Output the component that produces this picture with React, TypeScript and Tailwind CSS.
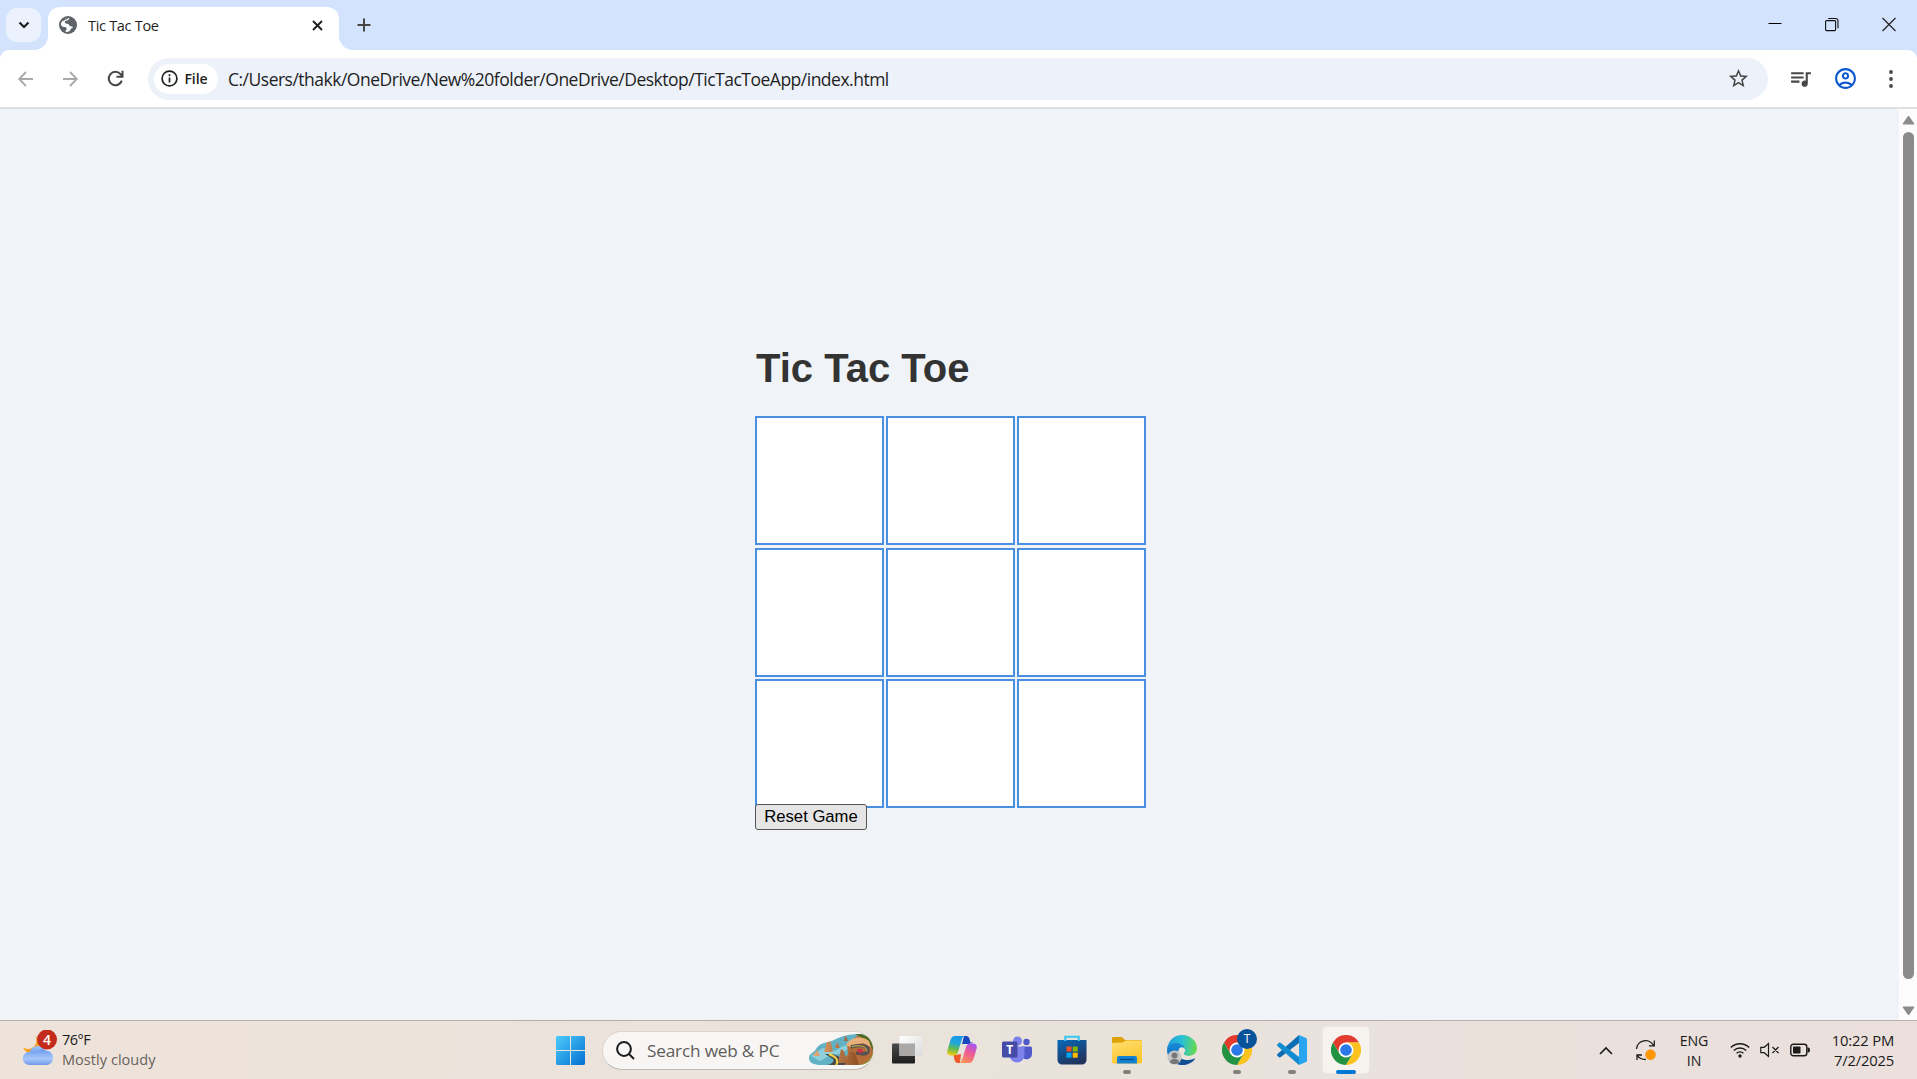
import React from "react";
import { MdOutlineAccountCircle, MdOutlineQueueMusic, MdStarOutline } from "react-icons/md";

function Globe() {
  return (
    <svg className="h-[18px] w-[18px]" viewBox="0 0 18 18">
      <circle cx="9" cy="9" r="9" fill="#5f6368" />
      <path d="M10.500 2C9.600 2.500 10 3.900 9 4.300c-1.300.4-2.900.2-3.200 1.500-.3 1.400 1 1.900 2.400 1.900 1.500 0 1.900.9 2.300 1.900.4.900 1.500.8 2.700.8.900 0 .8 1.300-.1 1.700-1.500.6-1.300 1.800-2.600 2.800-1 .8-2.500 1.200-3.700.9-.6-.200-.500-.900.1-1.300 1-.7.9-2 .4-2.700-.5-.8-1.500-.7-2.700-.8C3.200 10.900 2.900 9.400 1.900 8.900 1.900 5.200 5.600 1.500 10.500 2z" fill="#fff" />
      <path d="M3.200 5.200C4.500 3 6.500 1.900 9.400 1.900 8.700 3 7.600 3.300 6.300 3.700 4.900 4.100 4.800 5.400 3.200 5.200z" fill="#5f6368" />
    </svg>
  );
}

function TabStrip() {
  return (
    <div className="flex h-[50px] shrink-0 items-start bg-[#d3e3fd]">
      <button className="ml-[6px] mt-2 flex h-[34px] w-[35px] items-center justify-center rounded-[11px] bg-[#ebf2fe]">
        <svg className="h-3 w-3" viewBox="0 0 12 12" fill="none" stroke="#1f1f1f" strokeWidth="2.2">
          <path d="M1.500 3.500 6 8l4.500-4.500" />
        </svg>
      </button>
      <div className="relative ml-[7px] mt-[7px] flex h-[43px] w-[291px] items-center rounded-t-[12px] bg-white pb-[7px] pl-[11px]">
        <svg className="absolute -left-[14px] bottom-0 h-[14px] w-[14px]" viewBox="0 0 14 14"><path d="M14 0v14H0A14 14 0 0 0 14 0z" fill="#fff" /></svg>
        <svg className="absolute -right-[14px] bottom-0 h-[14px] w-[14px]" viewBox="0 0 14 14"><path d="M0 0v14h14A14 14 0 0 1 0 0z" fill="#fff" /></svg>
        <Globe />
        <span className="ml-[11px] w-[210px] pt-px text-[14.5px] tracking-[-0.3px] text-[#1f1f1f]">Tic Tac Toe</span>
        <svg className="ml-[14px] h-[11px] w-[11px]" viewBox="0 0 11 11" stroke="#1f1f1f" strokeWidth="1.900">
          <path d="M1 1l9 9M10 1l-9 9" />
        </svg>
      </div>
      <svg className="ml-[18px] mt-[18px] h-[14px] w-[14px]" viewBox="0 0 14 14" stroke="#474747" strokeWidth="2">
        <path d="M7 .5v13M.5 7h13" />
      </svg>
      <div className="ml-auto mr-[21px] mt-[17px] flex items-center gap-[43px]">
        <svg className="h-[15px] w-[14px]" viewBox="0 0 14 15" stroke="#000"><path d="M.5 6.500h13" /></svg>
        <svg className="h-[15px] w-[14px]" viewBox="0 0 14 15" fill="none" stroke="#111" strokeWidth="1.100">
          <rect x=".6" y="3.600" width="10" height="10" rx="1" />
          <path d="M3.200 1.500h7.300a2.500 2.500 0 0 1 2.500 2.500v7.300" />
        </svg>
        <svg className="h-[15px] w-[14px]" viewBox="0 0 14 15" stroke="#222" strokeWidth="1.200"><path d="M.5 1l13 13M13.500 1l-13 13" /></svg>
      </div>
    </div>
  );
}

function Toolbar() {
  return (
    <div className="h-[59px] shrink-0 bg-[#d3e3fd]">
      <div className="flex h-full items-center rounded-t-[9px] border-b-2 border-[#dfe1e1] bg-white">
        <svg className="ml-[18px] h-4 w-4" viewBox="0 0 16 16" fill="none" stroke="#a9a9a9" strokeWidth="1.800"><path d="M15 8H1.500M8 1L1.200 8 8 15" /></svg>
        <svg className="ml-[28px] h-4 w-4" viewBox="0 0 16 16" fill="none" stroke="#a9a9a9" strokeWidth="1.800"><path d="M1 8h13.500M8 1l6.800 7L8 15" /></svg>
        <svg className="ml-[29px] h-[17px] w-[17px]" viewBox="0 0 17 17" fill="none" stroke="#474747" strokeWidth="2"><path d="M14.800 10.600A6.700 6.700 0 1 1 13.500 4.100L15 5.900M15.500.8v6h-6" /></svg>
        <div className="ml-[24px] flex h-[42px] w-[1620px] items-center rounded-full bg-[#ecf1fa] px-[6px]">
          <div className="flex h-[30px] w-[64px] items-center rounded-full bg-white pl-[6.500px]">
            <svg className="h-[17px] w-[17px]" viewBox="0 0 17 17" fill="none" stroke="#1f1f1f" strokeWidth="1.700"><circle cx="8.500" cy="8.500" r="7.400" /><path d="M8.500 7.600v5M8.500 4.300v1.900" /></svg>
            <span className="ml-[7px] text-[14px] font-semibold tracking-[-0.1px] text-[#1f1f1f]">File</span>
          </div>
          <span className="ml-[10px] whitespace-nowrap pt-[2px] text-[17.500px] tracking-[-0.5px] text-[#1f1f1f]">C:/Users/thakk/OneDrive/New%20folder/OneDrive/Desktop/TicTacToeApp/index.html</span>
          <MdStarOutline className="ml-auto mr-[12px] h-[23px] w-[23px] text-[#474747]" />
        </div>
        <MdOutlineQueueMusic className="ml-[20px] h-[25px] w-[25px] text-[#474747]" />
        <MdOutlineAccountCircle className="ml-[20px] h-[25px] w-[25px] text-[#0b57d0]" />
        <svg className="ml-[31px] h-[18px] w-[4px]" viewBox="0 0 4 18" fill="#474747"><circle cx="2" cy="2" r="1.900" /><circle cx="2" cy="9" r="1.900" /><circle cx="2" cy="16" r="1.900" /></svg>
      </div>
    </div>
  );
}

function Row() {
  return (
    <div className="flex gap-[2px]">
      {[0, 1, 2].map((i) => <div key={i} className="h-[129px] w-[129px] border-2 border-[#4a90e2] bg-white" />)}
    </div>
  );
}

function Game() {
  return (
    <div className="flex min-h-0 flex-1 bg-[#f0f4f8] font-['Liberation_Sans',Arial,sans-serif]">
      <main className="flex flex-1 flex-col items-start pl-[755px] pt-[236px]">
        <h1 className="h-[71px] pl-px text-[40px] font-bold leading-[46px] text-[#333]">Tic Tac Toe</h1>
        <Row />
        <div className="mt-[3px]"><Row /></div>
        <div className="mt-[2px]"><Row /></div>
        <button className="relative -mt-[4px] h-[26px] w-[112px] rounded-[3px] border border-[#555] bg-[#e5e5e5] text-[16.670px] leading-none text-black">Reset Game</button>
      </main>
      <div className="flex w-[18px] flex-col items-center bg-[#fcfcfc] pl-px pt-[6px]">
        <svg className="h-[10px] w-[13px]" viewBox="0 0 13 10"><path d="M6.500 1 12 9H1z" fill="#8b8b8b" stroke="#8b8b8b" strokeLinejoin="round" /></svg>
        <div className="mt-[7px] h-[847px] w-[11px] rounded-full bg-[#8b8b8b]" />
        <svg className="mt-[27px] h-[10px] w-[13px]" viewBox="0 0 13 10"><path d="M6.500 9 12 1H1z" fill="#8b8b8b" stroke="#8b8b8b" strokeLinejoin="round" /></svg>
      </div>
    </div>
  );
}

function Weather() {
  return (
    <svg className="h-[36px] w-[36px]" viewBox="0 0 36 36">
      <defs>
        <linearGradient id="cl" x1="0" y1="0" x2="0" y2="1"><stop offset="0" stopColor="#9cc3fb" /><stop offset="1" stopColor="#6c93e6" /></linearGradient>
        <linearGradient id="cl2" x1="0" y1="0" x2="0" y2="1"><stop offset="0" stopColor="#6d9bee" /><stop offset=".6" stopColor="#a7c8fb" /><stop offset="1" stopColor="#7199e8" /></linearGradient>
        <linearGradient id="mn" x1="0" y1="0" x2="1" y2="1"><stop offset="0" stopColor="#fdc02f" /><stop offset="1" stopColor="#ee8a1b" /></linearGradient>
      </defs>
      <path d="M12 6c3 4 1 10-3 12-3 1.500-6 1-9-.5 1 3 4 5.500 8 5.500 6 0 10-5 9-10-.5-3.500-2.500-6-5-7z" fill="url(#mn)" />
      <path d="M6 26c0-6 4-10 9-10 4 0 6 2 7 5l3 5z" fill="url(#cl)" />
      <path d="M6.500 35a6.500 6.500 0 0 1-.5-13c3 0 4.500 1 6 2 1.500-3 4.500-4.500 7.500-4.500 2 0 3 .5 4.500 1.500 3.500 0 6 3 6 7s-3 7-6.500 7z" fill="url(#cl2)" />
      <circle cx="24" cy="9.500" r="10" fill="#c42b1c" />
      <text x="24" y="14.500" textAnchor="middle" fontFamily="Open Sans" fontSize="14" fontWeight="600" fill="#fff">4</text>
    </svg>
  );
}

function RoadScene() {
  return (
    <svg className="h-[32px] w-[64px]" viewBox="0 0 64 32">
      <defs>
        <linearGradient id="rk" x1="0" y1="0" x2="1" y2="0"><stop offset="0" stopColor="#e6a873" /><stop offset="1" stopColor="#8e4e22" /></linearGradient>
        <clipPath id="sc"><path d="M0 24c0-5 5-5 7-9 4-7 12-6 18-9 7-4 17-6 25-6 9 0 14 8 14 16 0 9-5 15-16 15H12C5 31 0 29 0 24z" /></clipPath>
      </defs>
      <g clipPath="url(#sc)">
        <path d="M0 0h64v32H0z" fill="#62b2c6" />
        <path d="M2 22l12-8 12 3 8-5 9-1-9 8-14 3-9 5z" fill="#8ed0dc" />
        <path d="M38 10l10-8h16v30H30l9-12z" fill="#b46c38" />
        <path d="M46 0h18v16l-4-7-8-6z" fill="#496b22" />
        <path d="M47 32c10-2 15-6 17-14v14z" fill="#7fa628" />
        <path d="M37 11c4-8 16-10 23-4l2 6-8-4-13 4z" fill="#e7b07b" />
        <path d="M16 32c6-2 10-4 8-7l-8-5h8c6 3 12 5 13 9l-4 5z" fill="#4a4a4b" />
        <path d="M20 20c7 3 10 5 7 12" fill="none" stroke="#f4d548" strokeWidth="2" />
        <path d="M42 13c10-3 18-1 17 4-1 4-6 3-12 2" fill="none" stroke="#555150" strokeWidth="3.500" />
        <path d="M43 12.500c9-2 15 0 15 5" fill="none" stroke="#f4d548" strokeWidth=".8" />
        <path d="M48 15.500l5-1 1 4-4 1z" fill="#c7314b" />
        <path d="M15 18l4-14 2 1 3 13zM26 14l2-6 3 6zM35 7l1.500-6 2.500 6zM4 22l4-6 3 6zM29 29l3-14 3 2 3 12zM37 31l4-14 5 2 4 12z" fill="url(#rk)" />
      </g>
    </svg>
  );
}

function TaskViewIcon() {
  return (
    <svg className="h-[30px] w-[30px]" viewBox="0 0 30 30">
      <defs>
        <linearGradient id="t1" x1="0" y1="0" x2="0" y2="1"><stop offset="0" stopColor="#4b4b4b" /><stop offset="1" stopColor="#1e1e1e" /></linearGradient>
        <linearGradient id="t2" x1="0" y1="0" x2="1" y2="1"><stop offset="0" stopColor="#fff" /><stop offset="1" stopColor="#d9dadb" /></linearGradient>
      </defs>
      <rect y="8.500" width="23" height="20" rx="1" fill="url(#t1)" />
      <rect x="7.500" y="1" width="22.500" height="20" rx="1" fill="url(#t2)" />
      <path d="M7.500 8.500H23V21H7.500z" fill="#aaa9a8" />
    </svg>
  );
}

function CopilotIcon() {
  return (
    <svg className="h-[30px] w-[30px]" viewBox="0 0 30 30">
      <defs>
        <linearGradient id="c1" x1=".5" y1="0" x2=".3" y2="1"><stop offset="0" stopColor="#1797ea" /><stop offset=".35" stopColor="#21a5dc" /><stop offset=".65" stopColor="#62bb56" /><stop offset="1" stopColor="#f1cb0e" /></linearGradient>
        <linearGradient id="c2" x1=".7" y1="0" x2=".3" y2="1"><stop offset="0" stopColor="#a556ed" /><stop offset=".45" stopColor="#ee5b97" /><stop offset="1" stopColor="#fb9355" /></linearGradient>
      </defs>
      <path d="M17 1h2c2 0 3 1 3.500 3l1 3.500h3L22 9h-7z" fill="#1747c1" />
      <path d="M13 28h-2c-2 0-3-1-3.500-3L6.500 20H9l5-1z" fill="#f0592b" />
      <path d="M8 1h10c-2 0-2.700 2-3.300 4L11 17c-.7 2-2 3.500-4 3.500H4c-3 0-4.500-2-3.500-5.500L3.500 5C4.500 2.500 5.500 1 8 1z" fill="url(#c1)" />
      <path d="M22 28H12c2 0 2.700-2 3.300-4L19 12c.7-2 2-3.500 4-3.500h3c3 0 4.500 2 3.500 5.500L26.500 24c-1 2.500-2 4-4.500 4z" fill="url(#c2)" />
    </svg>
  );
}

function TeamsIcon() {
  return (
    <svg className="h-[30px] w-[30px]" viewBox="0 0 30 30">
      <circle cx="24.500" cy="7" r="3.200" fill="#5059c9" />
      <path d="M20 11.500h8.500c.8 0 1.500.7 1.500 1.500v6a5.500 5.500 0 0 1-9 4z" fill="#5059c9" />
      <circle cx="15.500" cy="6" r="4.500" fill="#7b83eb" />
      <path d="M9 11.500h12.500c.6 0 1 .4 1 1V20a7.500 7.500 0 0 1-15 0z" fill="#7b83eb" />
      <rect y="6.500" width="15.500" height="16" rx="1.500" fill="#444ba8" />
      <text x="7.700" y="19" textAnchor="middle" fontFamily="Open Sans" fontSize="12" fontWeight="700" fill="#fff">T</text>
    </svg>
  );
}

function StoreIcon() {
  return (
    <svg className="h-[30px] w-[30px]" viewBox="0 0 30 30">
      <defs><linearGradient id="s1" x1="0" y1="0" x2=".5" y2="1"><stop offset="0" stopColor="#0669bb" /><stop offset="1" stopColor="#21345d" /></linearGradient></defs>
      <path d="M.5 5h29v20a4.500 4.500 0 0 1-4.500 4.500H5A4.500 4.500 0 0 1 .5 25z" fill="url(#s1)" />
      <path d="M8.300 6V1.700h13.400V6" fill="none" stroke="#37c6f4" strokeWidth="2" />
      <path d="M9.500 11.500h5v5h-5z" fill="#f25022" /><path d="M15.700 11.500h5v5h-5z" fill="#7fba00" />
      <path d="M9.500 17.700h5v5h-5z" fill="#00a4ef" /><path d="M15.700 17.700h5v5h-5z" fill="#ffb900" />
    </svg>
  );
}

function FolderIcon() {
  return (
    <svg className="h-[30px] w-[30px]" viewBox="0 0 30 30">
      <defs><linearGradient id="f1" x1="0" y1="0" x2=".4" y2="1"><stop offset="0" stopColor="#ffe073" /><stop offset="1" stopColor="#fcc52d" /></linearGradient></defs>
      <path d="M0 3.500C0 2.600.6 2 1.500 2H10l3 3h15.500c.8 0 1.500.7 1.500 1.500V12H0z" fill="#dfa20b" />
      <path d="M0 8l10.500-.5L14 5.500h14.500c.8 0 1.500.7 1.500 1.500v20c0 .8-.7 1.500-1.500 1.500h-27A1.500 1.500 0 0 1 0 27z" fill="url(#f1)" />
      <path d="M5 28.500V23a2 2 0 0 1 2-2h16a2 2 0 0 1 2 2v5.500z" fill="#1382d2" /><path d="M8 24.500h14" stroke="#094b86" strokeWidth="1.300" />
    </svg>
  );
}

function EdgeIcon() {
  return (
    <svg className="h-[30px] w-[30px]" viewBox="0 0 30 30">
      <defs>
        <linearGradient id="e1" x1="0" y1=".4" x2="1" y2=".5"><stop offset="0" stopColor="#219bd8" /><stop offset=".5" stopColor="#2cc1d5" /><stop offset="1" stopColor="#67da48" /></linearGradient>
        <linearGradient id="e2" x1="0" y1="0" x2="0" y2="1"><stop offset="0" stopColor="#188bd7" /><stop offset="1" stopColor="#0b63b5" /></linearGradient>
      </defs>
      <path d="M0 14C1 6 7 0 15 0c9 0 15 6.500 15 13 0 5-4 8-8.500 8-3 0-5-1-5-2 0-.8 1.500-1.500 1.500-4 0-3-3-6-8-6-5 0-9 2-10 5z" fill="url(#e1)" />
      <path d="M0 15c0-4 4-7 8.500-7 5 0 9 2.500 9.500 6-3-2-7 0-7 5s4 8 8 10c-1 1-3 1-4 1C6.500 30 0 23 0 15z" fill="url(#e2)" />
      <path d="M11 17c-1 6 4 8 10 8 3 0 5-1 6.500-1.500.5-.2.8.1.5.5C25 28 20 30 15 30c-6 0-7-9-4-13z" fill="#124e94" />
      <path d="M11.500 16c0-3 2.500-4.500 4.500-3.500 2.500 1 2 3.500.8 5-1.200 1.800 1.700 3.500 4.700 3.500 3 0 4.500-.8 6-2-.5 3.500-3 5.500-7.500 5.500-4.500 0-8.500-3.500-8.500-8.500z" fill="#eae3dc" />
      <circle cx="7.500" cy="22.500" r="7" fill="#c7c7c7" />
      <circle cx="7.500" cy="20.500" r="3" fill="#777" /><path d="M2.800 27c0-4 9.400-4 9.400 0-2.500 3-7 3-9.400 0z" fill="#777" />
    </svg>
  );
}

function ChromeIcon() {
  return (
    <svg className="h-[30px] w-[30px]" viewBox="0 0 48 48">
      <path d="M24 12h20.800A24 24 0 0 0 3.200 12l10.400 18L24 24z" fill="#e33b2e" />
      <path d="M34.400 30L24 48a24 24 0 0 0 20.800-36H24z" fill="#fcc31e" />
      <path d="M13.600 30L3.200 12A24 24 0 0 0 24 48l10.400-18z" fill="#229342" />
      <circle cx="24" cy="24" r="12" fill="#fff" /><circle cx="24" cy="24" r="9.300" fill="#2b78e9" />
    </svg>
  );
}

function CodeIcon() {
  return (
    <svg className="h-[30px] w-[30px]" viewBox="0 0 30 30">
      <path d="M22 0v8L3.500 22.300c-.5.400-1 .4-1.500 0L.4 20.800c-.5-.5-.5-1.200 0-1.700z" fill="#0c6fb5" />
      <path d="M22 30v-8L3.500 7.700c-.5-.4-1-.4-1.500 0L.4 9.200c-.5.500-.5 1.200 0 1.700z" fill="#138bd0" />
      <path d="M22 0l7 3c.7.4 1 .9 1 1.600v20.800c0 .7-.3 1.200-1 1.600l-7 3z" fill="#29a5ef" />
    </svg>
  );
}

function Slot({ children, running = false }: { children: React.ReactNode; running?: boolean }) {
  return (
    <div className="relative flex h-12 w-[55px] items-center justify-center">
      {children}
      {running && <div className="absolute bottom-0 h-[4px] w-[8px] rounded-full bg-[#85807c]" />}
    </div>
  );
}

function Taskbar() {
  return (
    <div className="flex h-[59px] shrink-0 items-center border-t border-[#b9b0ac] bg-gradient-to-r from-[#eee3da] via-[#e9e3dc] to-[#ebe0dc] text-[#1b1b1b]">
      <div className="flex w-[556px] items-center pb-[4px] pl-[23px]">
        <Weather />
        <div className="ml-[3px] pt-[3px] text-[14.500px] leading-[20px]">
          <div className="tracking-[-0.5px]">76°F</div>
          <div className="tracking-[0.05px] text-[#68615c]">Mostly cloudy</div>
        </div>
      </div>
      <svg className="h-[29px] w-[29px]" viewBox="0 0 29 29">
        <defs><linearGradient id="w" x1="0" y1="0" x2="1" y2="1"><stop offset="0" stopColor="#4ecbfb" /><stop offset="1" stopColor="#0270d2" /></linearGradient></defs>
        <path d="M1 0h13v14H0V1zM15 0h13l1 1v13H15zM0 15h14v14H1l-1-1zM15 15h14v13l-1 1H15z" fill="url(#w)" />
      </svg>
      <div className="ml-[17px] flex h-[39px] w-[272px] items-center rounded-full border border-[#dcd3cd] border-b-[#bfb8b3] bg-[#f8f6f4] pl-[13px]">
        <svg className="h-[19px] w-[19px]" viewBox="0 0 19 19" fill="none" stroke="#1c1c1c" strokeWidth="2"><circle cx="8" cy="8" r="6.900" /><path d="M13 13l5 5" /></svg>
        <span className="ml-[12px] w-[162px] whitespace-nowrap pt-px text-[17.200px] tracking-[-0.18px] text-[#5f5d5b]">Search web &amp; PC</span>
        <RoadScene />
      </div>
      <div className="ml-[5px] flex items-center">
        <Slot><TaskViewIcon /></Slot>
        <Slot><CopilotIcon /></Slot>
        <Slot><TeamsIcon /></Slot>
        <Slot><StoreIcon /></Slot>
        <Slot running><FolderIcon /></Slot>
        <Slot><EdgeIcon /></Slot>
        <Slot running>
          <ChromeIcon />
          <span className="absolute right-[7px] top-[3px] flex h-5 w-5 items-center justify-center rounded-full bg-[#07539b] text-[12px] text-white">T</span>
        </Slot>
        <Slot running><CodeIcon /></Slot>
        <div className="relative ml-[3px] flex h-12 w-12 items-center justify-center rounded-[5px] border border-[#eee8e2] bg-[#f7f4ef]">
          <ChromeIcon />
          <div className="absolute -bottom-px h-[4px] w-[20px] rounded-full bg-[#0078d4]" />
        </div>
      </div>
      <div className="ml-auto mr-[23px] flex items-center">
        <svg className="h-[9px] w-[14px]" viewBox="0 0 14 9" fill="none" stroke="#1b1b1b" strokeWidth="1.600"><path d="M1 8l6-6 6 6" /></svg>
        <svg className="ml-[22px] h-[22px] w-[22px]" viewBox="0 0 22 22" fill="none" stroke="#1b1b1b" strokeWidth="1.300"><path d="M1.500 10A9 9 0 0 1 18.500 6.500M19.300 1.500v5.300H14M7 16H2v5M2.300 16.500c2 3 5 4 8.500 4" /><circle cx="15.500" cy="15.700" r="5" fill="#ff9800" stroke="#ee8e0b" strokeWidth=".5" /></svg>
        <div className="ml-[19px] w-[36px] pt-px text-center text-[14.200px] leading-[20px] tracking-[-0.1px]">ENG<br />IN</div>
        <svg className="ml-[18px] h-[16px] w-[20px]" viewBox="0 0 20 16" fill="none" stroke="#1b1b1b" strokeWidth="1.400"><path d="M.8 5.500a13 13 0 0 1 18.400 0M3.800 8.500a8.800 8.800 0 0 1 12.400 0M6.600 11.300a4.800 4.800 0 0 1 6.800 0" /><circle cx="10" cy="14" r="1.700" fill="#1b1b1b" stroke="none" /></svg>
        <svg className="ml-[10px] h-[16px] w-[20px]" viewBox="0 0 20 16" fill="none" stroke="#1b1b1b" strokeWidth="1.200"><path d="M.8 5.300h3.400L8.500 1.500v13L4.200 10.700H.8zM12.500 5l6 6M18.500 5l-6 6" /></svg>
        <svg className="ml-[10px] h-[14px] w-[20px]" viewBox="0 0 20 14"><rect x=".8" y="1.300" width="16" height="11.400" rx="2.500" fill="none" stroke="#1b1b1b" strokeWidth="1.400" /><rect x="3" y="3.500" width="7.500" height="7" rx=".8" fill="#1b1b1b" /><path d="M17.500 4.500c1.500 0 2.500.5 2.500 2.500s-1 2.500-2.500 2.500z" fill="#1b1b1b" /></svg>
        <div className="w-[84px] whitespace-nowrap text-right text-[14.800px] leading-[20px] tracking-[-0.2px]">10:22 PM<br />7/2/2025</div>
      </div>
    </div>
  );
}

export default function App() {
  return (
    <div className="flex h-[1079px] w-[1917px] flex-col overflow-hidden font-['Open_Sans','Noto_Sans',sans-serif]">
      <TabStrip />
      <Toolbar />
      <Game />
      <Taskbar />
    </div>
  );
}
